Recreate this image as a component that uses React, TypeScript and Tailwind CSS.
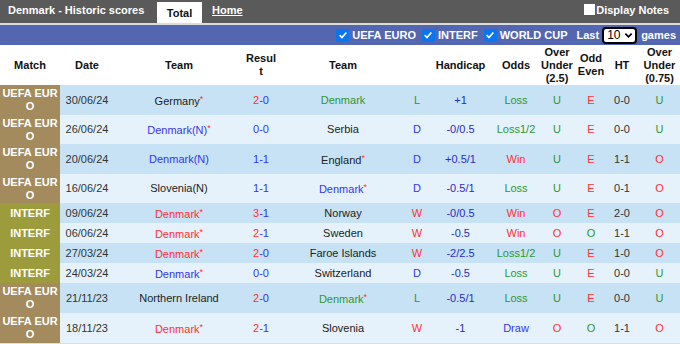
import React from 'react';

type Row = {
  match: 'UEFA EURO' | 'INTERF';
  date: string;
  home: string;
  homeStar?: boolean;
  homeColor?: string;
  score: [number, number];
  away: string;
  awayStar?: boolean;
  awayColor?: string;
  res: 'W' | 'D' | 'L';
  handicap: string;
  odds: string;
  ou: 'O' | 'U';
  oe: 'O' | 'E';
  ht: string;
  ou75: 'O' | 'U';
};

const RED = 'text-[#ff3030]';
const BLUE = 'text-[#3535f0]';
const GREEN = 'text-[#2f962f]';
const DARK = 'text-[#222]';

const rows: Row[] = [
  { match: 'UEFA EURO', date: '30/06/24', home: 'Germany', homeStar: true, score: [2, 0], away: 'Denmark', awayColor: GREEN, res: 'L', handicap: '+1', odds: 'Loss', ou: 'U', oe: 'E', ht: '0-0', ou75: 'U' },
  { match: 'UEFA EURO', date: '26/06/24', home: 'Denmark(N)', homeStar: true, homeColor: BLUE, score: [0, 0], away: 'Serbia', res: 'D', handicap: '-0/0.5', odds: 'Loss1/2', ou: 'U', oe: 'E', ht: '0-0', ou75: 'U' },
  { match: 'UEFA EURO', date: '20/06/24', home: 'Denmark(N)', homeColor: BLUE, score: [1, 1], away: 'England', awayStar: true, res: 'D', handicap: '+0.5/1', odds: 'Win', ou: 'U', oe: 'E', ht: '1-1', ou75: 'O' },
  { match: 'UEFA EURO', date: '16/06/24', home: 'Slovenia(N)', score: [1, 1], away: 'Denmark', awayStar: true, awayColor: BLUE, res: 'D', handicap: '-0.5/1', odds: 'Loss', ou: 'U', oe: 'E', ht: '0-1', ou75: 'O' },
  { match: 'INTERF', date: '09/06/24', home: 'Denmark', homeStar: true, homeColor: RED, score: [3, 1], away: 'Norway', res: 'W', handicap: '-0/0.5', odds: 'Win', ou: 'O', oe: 'E', ht: '2-0', ou75: 'O' },
  { match: 'INTERF', date: '06/06/24', home: 'Denmark', homeStar: true, homeColor: RED, score: [2, 1], away: 'Sweden', res: 'W', handicap: '-0.5', odds: 'Win', ou: 'O', oe: 'O', ht: '1-1', ou75: 'O' },
  { match: 'INTERF', date: '27/03/24', home: 'Denmark', homeStar: true, homeColor: RED, score: [2, 0], away: 'Faroe Islands', res: 'W', handicap: '-2/2.5', odds: 'Loss1/2', ou: 'U', oe: 'E', ht: '1-0', ou75: 'O' },
  { match: 'INTERF', date: '24/03/24', home: 'Denmark', homeStar: true, homeColor: BLUE, score: [0, 0], away: 'Switzerland', res: 'D', handicap: '-0.5', odds: 'Loss', ou: 'U', oe: 'E', ht: '0-0', ou75: 'U' },
  { match: 'UEFA EURO', date: '21/11/23', home: 'Northern Ireland', score: [2, 0], away: 'Denmark', awayStar: true, awayColor: GREEN, res: 'L', handicap: '-0.5/1', odds: 'Loss', ou: 'U', oe: 'E', ht: '0-0', ou75: 'U' },
  { match: 'UEFA EURO', date: '18/11/23', home: 'Denmark', homeStar: true, homeColor: RED, score: [2, 1], away: 'Slovenia', res: 'W', handicap: '-1', odds: 'Draw', ou: 'O', oe: 'O', ht: '1-1', ou75: 'O' },
];

const resColor = { W: RED, D: BLUE, L: GREEN };
const oddsColor = (o: string) => (o === 'Win' ? RED : o === 'Draw' ? BLUE : GREEN);
const ouColor = (v: string) => (v === 'O' ? RED : GREEN);
const oeColor = (v: string) => (v === 'E' ? RED : GREEN);

const Star = () => <span className="text-[#ff3030] text-[9px] align-[3px]">*</span>;

const CheckBox = () => (
  <span className="inline-flex h-[13px] w-[13px] items-center justify-center rounded-[2px] bg-[#0b74f0]">
    <svg viewBox="0 0 12 12" className="h-[10px] w-[10px]" fill="none" stroke="white" strokeWidth="2">
      <path d="M2 6.2 L4.8 9 L10 3" />
    </svg>
  </span>
);

function TeamName({ name, star, color }: { name: string; star?: boolean; color?: string }) {
  return (
    <span className={color ?? DARK}>
      {name}
      {star && <Star />}
    </span>
  );
}

export default function App() {
  return (
    <div className="w-[680px] h-[344px] overflow-hidden bg-white font-['Liberation_Sans',Arial,sans-serif] text-[11px]">
      {/* title bar */}
      <div className="flex h-[23px] items-end bg-[#5a5a5a] font-bold text-white">
        <span className="mb-[5px] ml-[8px] w-[149px]">Denmark - Historic scores</span>
        <span className="flex h-[21px] w-[45px] items-center justify-center bg-white pt-[1px] text-[#111]">Total</span>
        <span className="mb-[5px] ml-[10px] underline">Home</span>
        <span className="mb-[5px] ml-auto mr-[11px] flex items-center gap-[1px]">
          <span className="inline-block h-[11px] w-[11px] bg-white" />
          Display Notes
        </span>
      </div>
      <div className="h-[2px] bg-[#dcdcdc]" />
      {/* filter bar */}
      <div className="flex h-[20px] items-center justify-end gap-[3px] bg-[#5366b0] pr-[4px] font-bold text-white">
        <CheckBox />
        <span className="mr-[3px]">UEFA EURO</span>
        <CheckBox />
        <span className="mr-[3px]">INTERF</span>
        <CheckBox />
        <span className="mr-[6px]">WORLD CUP</span>
        <span>Last</span>
        <span className="flex h-[17px] w-[35px] items-center justify-between rounded-[4px] border-2 border-black bg-white pl-[3px] pr-[2px] font-normal text-black text-[12px]">
          10
          <svg viewBox="0 0 10 10" className="h-[9px] w-[9px]" fill="none" stroke="black" strokeWidth="2">
            <path d="M1.5 3 L5 6.5 L8.5 3" />
          </svg>
        </span>
        <span className="ml-[1px]">games</span>
      </div>
      <table className="w-[680px] table-fixed border-collapse text-center leading-[13px]">
        <colgroup>
          <col className="w-[60px]" />
          <col className="w-[54px]" />
          <col className="w-[130px]" />
          <col className="w-[34px]" />
          <col className="w-[130px]" />
          <col className="w-[18px]" />
          <col className="w-[69px]" />
          <col className="w-[42px]" />
          <col className="w-[40px]" />
          <col className="w-[28px]" />
          <col className="w-[34px]" />
          <col className="w-[41px]" />
        </colgroup>
        <thead>
          <tr className="h-[40px] font-bold text-[#111]">
            <th className="p-0">Match</th>
            <th className="p-0">Date</th>
            <th className="p-0">Team</th>
            <th className="break-all px-[1px]">Result</th>
            <th className="p-0">Team</th>
            <th className="p-0"></th>
            <th className="p-0">Handicap</th>
            <th className="p-0">Odds</th>
            <th className="p-0">Over Under (2.5)</th>
            <th className="p-0">Odd Even</th>
            <th className="p-0">HT</th>
            <th className="p-0">Over Under (0.75)</th>
          </tr>
        </thead>
        <tbody>
          {rows.map((r, i) => {
            const euro = r.match === 'UEFA EURO';
            const [h, a] = r.score;
            return (
              <tr
                key={i}
                className={`${euro ? (i === 1 || i === 3 ? 'h-[29px]' : 'h-[30px]') : 'h-[20px]'} ${
                  i % 2 === 0 ? 'bg-[#c7e2f5]' : 'bg-[#e5f2fb]'
                }`}
              >
                <td className={`break-all p-0 font-bold text-white ${euro ? 'bg-[#a38b5d]' : 'bg-[#9d9c3d]'}`}>{r.match}</td>
                <td className="p-0 text-[#333]">{r.date}</td>
                <td className="p-0">
                  <TeamName name={r.home} star={r.homeStar} color={r.homeColor} />
                </td>
                <td className="p-0">
                  <span className={h > a ? RED : BLUE}>{h}</span>
                  <span className={BLUE}>-</span>
                  <span className={a > h ? RED : BLUE}>{a}</span>
                </td>
                <td className="p-0">
                  <TeamName name={r.away} star={r.awayStar} color={r.awayColor} />
                </td>
                <td className={`p-0 ${resColor[r.res]}`}>{r.res}</td>
                <td className="p-0 text-[#2b2bc4]">{r.handicap}</td>
                <td className={`p-0 ${oddsColor(r.odds)}`}>{r.odds}</td>
                <td className={`p-0 ${ouColor(r.ou)}`}>{r.ou}</td>
                <td className={`p-0 ${oeColor(r.oe)}`}>{r.oe}</td>
                <td className="p-0 text-[#333]">{r.ht}</td>
                <td className={`p-0 ${ouColor(r.ou75)}`}>{r.ou75}</td>
              </tr>
            );
          })}
        </tbody>
      </table>
      <div className="h-[1px] bg-[#ddd]" />
    </div>
  );
}
